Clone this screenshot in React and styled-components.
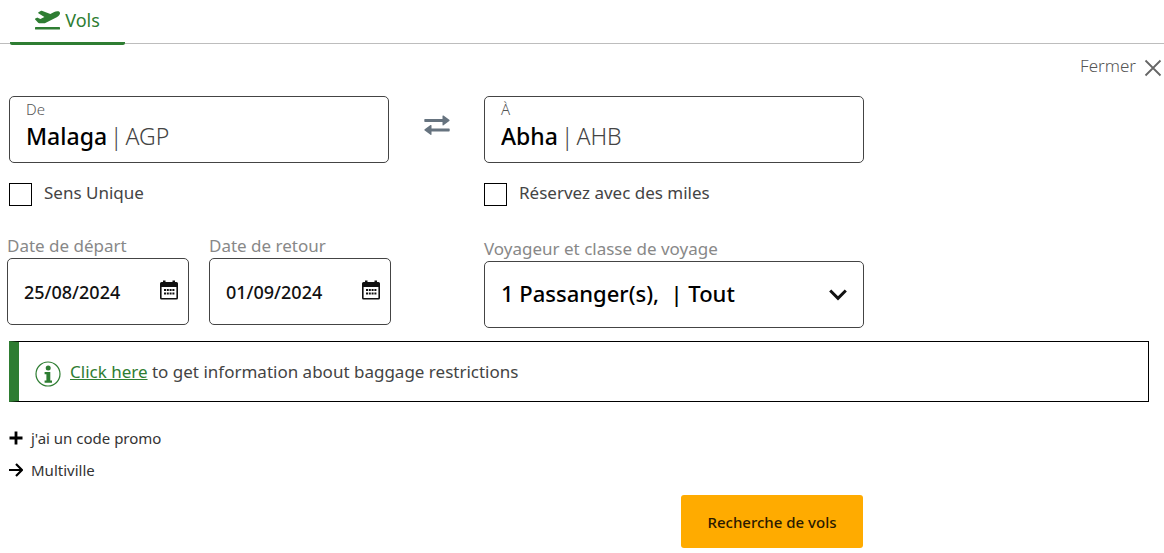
import { useState } from "react";
import styled, { createGlobalStyle } from "styled-components";
import { FaPlaneDeparture } from "react-icons/fa";

const GlobalStyle = createGlobalStyle`
    * {
        box-sizing: border-box;
    }
    body {
        margin: 0;
        background: #FFFFFF;
        color: #444444;
        font-family: 'Noto Sans', 'Open Sans', sans-serif;
        font-weight: 400;
    }
    button, input, select {
        font-family: inherit;
    }
`

function SwapIcon(){
    return (
        <svg width="26" height="20" viewBox="0 0 26 20" fill="#66737F" aria-hidden="true">
            <path d="M1 3.900H18.500V1.100Q18.500 0 19.500 .6L25.300 4.800Q26 5.400 25.300 6L19.500 10.200Q18.500 10.800 18.500 9.700V7H1Q.3 7 .3 6.300V4.600Q.3 3.900 1 3.900Z"/>
            <path d="M25 13.400H7.500V10.600Q7.500 9.500 6.500 10.100L.7 14.300Q0 14.900 .7 15.500L6.500 19.700Q7.500 20.300 7.500 19.200V16.500H25Q25.700 16.500 25.700 15.800V14.100Q25.700 13.400 25 13.400Z"/>
        </svg>
    )
}

function CalendarIcon(){
    return (
        <svg width="18" height="20" viewBox="0 0 18 20" fill="#111111" aria-hidden="true">
            <path fillRule="evenodd" d="M3 2V.5h2.500V2h7V.5H15V2h1.500A1.500 1.500 0 0 1 18 3.500V18a1.500 1.500 0 0 1-1.500 1.500h-15A1.500 1.500 0 0 1 0 18V3.500A1.500 1.500 0 0 1 1.500 2ZM1.600 7v10.900h14.800V7Z"/>
            <path d="M4 9h2v2H4zM6.800 9h2v2h-2zM9.600 9h2v2h-2zM12.400 9h2v2h-2zM4 12.500h2v2H4zM6.800 12.500h2v2h-2zM9.600 12.500h2v2h-2zM12.400 12.500h2v2h-2z"/>
        </svg>
    )
}

function InfoIcon(){
    return (
        <svg width="26" height="26" viewBox="0 0 26 26" fill="#2E7D32" aria-hidden="true">
            <circle cx="13" cy="13" r="12" fill="none" stroke="#2E7D32" strokeWidth="1.200"/>
            <circle cx="13.200" cy="7" r="2.500"/>
            <path d="M9.600 11h5.700v8.400h1.700v2.300H9.600v-2.300h1.800v-6.100H9.600z"/>
        </svg>
    )
}

function LocationField({ id, label, city, code }){
    const [value, setValue] = useState(city);

    return (
        <FieldBox>
            <FieldLabel htmlFor={id}>{label}</FieldLabel>
            <FieldValue>
                <CityInput id={id} value={value} onChange={(e) => setValue(e.target.value)}/>
                <span>|</span>
                <span>{code}</span>
            </FieldValue>
        </FieldBox>
    )
}

function DateField({ id, label, date }){
    return (
        <div>
            <Label htmlFor={id}>{label}</Label>
            <DateBox>
                <DateInput id={id} type="text" defaultValue={date}/>
                <CalendarIcon/>
            </DateBox>
        </div>
    )
}

export default function App(){
    return (
        <>
            <GlobalStyle/>
            <Tabs>
                <Tab type="button"><FaPlaneDeparture size={25}/>Vols</Tab>
            </Tabs>
            <Content>
                <CloseRow>
                    <Close type="button">
                        Fermer
                        <svg width="18" height="18" viewBox="0 0 18 18" stroke="#666666" strokeWidth="1.800" aria-hidden="true">
                            <path d="M1.500 1.500l15 15M16.500 1.500l-15 15"/>
                        </svg>
                    </Close>
                </CloseRow>
                <form onSubmit={(e) => e.preventDefault()}>
                    <Fields>
                        <LocationField id="from" label="De" city="Malaga" code="AGP"/>
                        <Swap type="button" aria-label="Inverser"><SwapIcon/></Swap>
                        <LocationField id="to" label="À" city="Abha" code="AHB"/>
                    </Fields>
                    <Fields>
                        <Check><input type="checkbox"/>Sens Unique</Check>
                        <span/>
                        <Check><input type="checkbox"/>Réservez avec des miles</Check>
                    </Fields>
                    <Fields>
                        <Dates>
                            <DateField id="departure" label="Date de départ" date="25/08/2024"/>
                            <DateField id="return" label="Date de retour" date="01/09/2024"/>
                        </Dates>
                        <span/>
                        <Travellers>
                            <Label htmlFor="travellers">Voyageur et classe de voyage</Label>
                            <SelectBox>
                                <Select id="travellers">
                                    <option>{"1 Passanger(s),\u00a0 | Tout"}</option>
                                </Select>
                                <svg width="18" height="12" viewBox="0 0 18 12" fill="none" stroke="#111111" strokeWidth="3" aria-hidden="true">
                                    <path d="M1.200 1.500L9 9.300l7.800-7.800"/>
                                </svg>
                            </SelectBox>
                        </Travellers>
                    </Fields>
                    <Notice>
                        <InfoIcon/>
                        <p><a href="#baggage">Click here</a> to get information about baggage restrictions</p>
                    </Notice>
                    <Extras>
                        <Extra href="#promo">
                            <svg width="14" height="14" viewBox="0 0 14 14" stroke="#000000" strokeWidth="2.800" aria-hidden="true">
                                <path d="M7 .5v13M.5 7h13"/>
                            </svg>
                            j'ai un code promo
                        </Extra>
                        <Extra href="#multiville">
                            <svg width="14" height="14" viewBox="0 0 14 14" fill="none" stroke="#000000" strokeWidth="2.200" aria-hidden="true">
                                <path d="M0 7h12.500M7 1l6 6-6 6"/>
                            </svg>
                            Multiville
                        </Extra>
                    </Extras>
                    <Actions>
                        <Search type="submit">Recherche de vols</Search>
                    </Actions>
                </form>
            </Content>
        </>
    )
}

const Tabs = styled.nav`
    display: flex;
    height: 44px;
    padding-left: 10px;
    border-bottom: 1px solid #BDBDBD;
`

const Tab = styled.button`
    display: flex;
    justify-content: center;
    align-items: center;
    gap: 5px;
    width: 115px;
    height: 45px;
    padding: 0 0 3px;
    border: none;
    border-bottom: 3px solid #2E7D32;
    border-radius: 2px;
    background: none;
    font-size: 18px;
    font-weight: 400;
    color: #2E7D32;
`

const Content = styled.main`
    padding: 0 0 5px 9px;
`

const CloseRow = styled.div`
    display: flex;
    justify-content: flex-end;
    height: 52px;
    padding: 8px 2px 0 0;
`

const Close = styled.button`
    display: flex;
    align-items: center;
    gap: 8px;
    height: 26px;
    padding: 0;
    border: none;
    background: none;
    font-size: 17px;
    font-weight: 300;
    color: #555555;

    svg {
        margin-top: 6px;
    }
`

const Fields = styled.div`
    display: grid;
    grid-template-columns: minmax(0, 4fr) minmax(0, 1fr) minmax(0, 4fr);
    max-width: 855px;
`

const FieldBox = styled.div`
    height: 67px;
    padding: 3px 16px;
    border: 1px solid #444444;
    border-radius: 5px;
`

const FieldLabel = styled.label`
    display: block;
    font-size: 15px;
    font-weight: 300;
    line-height: 18px;
    color: #555555;
`

const FieldValue = styled.div`
    display: flex;
    gap: 3px;
    font-size: 23px;
    font-weight: 300;
    line-height: 36px;
    color: #444444;
`

const CityInput = styled.input`
    field-sizing: content;
    height: 36px;
    padding: 0;
    border: none;
    outline: none;
    font-size: 23px;
    font-weight: 500;
    color: #000000;
`

const Swap = styled.button`
    display: flex;
    justify-content: center;
    align-items: center;
    height: 58px;
    padding: 0;
    border: none;
    background: none;
`

const Check = styled.label`
    display: flex;
    align-items: center;
    gap: 12px;
    padding-top: 17px;
    font-size: 17px;
    line-height: 24px;

    input {
        appearance: none;
        width: 23px;
        height: 23px;
        margin: 3px 0 0;
        border: 1px solid #000000;
    }
`

const Dates = styled.div`
    display: grid;
    grid-template-columns: repeat(2, minmax(0, 1fr));
    gap: 20px;
    margin: 28px -2px 0;
`

const Label = styled.label`
    display: block;
    font-size: 17px;
    line-height: 24px;
    color: #888888;
`

const DateBox = styled.div`
    display: flex;
    align-items: center;
    height: 67px;
    padding: 0 10px 0 16px;
    border: 1px solid #444444;
    border-radius: 5px;

    svg {
        flex-shrink: 0;
        margin-bottom: 4px;
    }
`

const DateInput = styled.input`
    flex: 1;
    min-width: 0;
    padding: 0;
    border: none;
    outline: none;
    font-size: 18px;
    font-weight: 500;
    color: #111111;
`

const Travellers = styled.div`
    margin-top: 31px;
`

const SelectBox = styled.div`
    display: flex;
    align-items: center;
    height: 67px;
    padding: 0 16px;
    border: 1px solid #444444;
    border-radius: 5px;
`

const Select = styled.select`
    appearance: none;
    flex: 1;
    min-width: 0;
    padding: 0 0 3px;
    border: none;
    outline: none;
    background: none;
    font-size: 22px;
    font-weight: 500;
    color: #000000;
`

const Notice = styled.div`
    display: flex;
    align-items: center;
    gap: 9px;
    min-height: 61px;
    margin: 13px 15px 0 0;
    padding-left: 16px;
    border: 1px solid #000000;
    border-left: 10px solid #2E7D32;
    font-size: 17px;
    line-height: 24px;

    svg {
        margin-top: 5px;
    }
    p {
        margin: 0;
    }
    a {
        color: #2E7D32;
    }
`

const Extras = styled.div`
    display: flex;
    flex-direction: column;
    align-items: flex-start;
    gap: 8px;
    margin-top: 24px;
`

const Extra = styled.a`
    display: flex;
    align-items: center;
    gap: 8px;
    font-size: 15px;
    line-height: 24px;
    color: #333333;
    text-decoration: none;
`

const Actions = styled.div`
    display: flex;
    justify-content: flex-end;
    max-width: 854px;
    margin-top: 13px;
`

const Search = styled.button`
    width: 182px;
    height: 53px;
    border: none;
    border-radius: 3px;
    background: #FFAB00;
    font-size: 15px;
    font-weight: 500;
    color: #2B1A00;
`
